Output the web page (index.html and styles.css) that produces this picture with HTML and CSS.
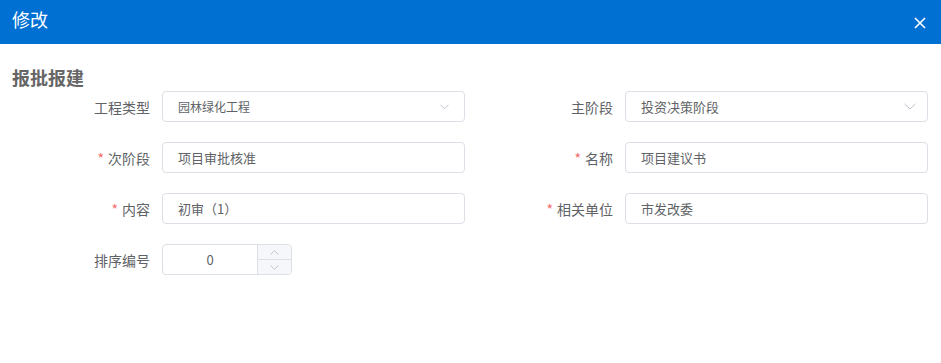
FILE: index.html
```html
<!DOCTYPE html>
<html lang="zh-CN">
<head>
    <meta charset="UTF-8">
    <title>修改</title>
    <link rel="stylesheet" href="styles.css">
</head>
<body>
<div class="dialog">
    <div class="dialog-header">
        <span class="dialog-title">修改</span>
        <span class="dialog-close">
            <svg width="12" height="12" viewBox="0 0 12 12"><path d="M1 1L11 11M11 1L1 11" stroke="#fff" stroke-width="1.6" fill="none"/></svg>
        </span>
    </div>
    <div class="dialog-body">
        <h2 class="section-title">报批报建</h2>
        <form class="form">
            <div class="form-item">
                <label class="form-label">工程类型</label>
                <div class="control select small">
                    <span>园林绿化工程</span>
                    <svg class="arrow" width="9" height="6" viewBox="0 0 9 6"><path d="M0.5 0.8L4.5 4.8L8.5 0.8" stroke="#c0c4cc" fill="none"/></svg>
                </div>
            </div>
            <div class="form-item">
                <label class="form-label">主阶段</label>
                <div class="control select">
                    <span>投资决策阶段</span>
                    <svg class="arrow" width="12" height="7" viewBox="0 0 12 7"><path d="M0.5 0.8L6 6L11.5 0.8" stroke="#c0c4cc" fill="none"/></svg>
                </div>
            </div>
            <div class="form-item">
                <label class="form-label"><i class="req">*</i>次阶段</label>
                <div class="control">项目审批核准</div>
            </div>
            <div class="form-item">
                <label class="form-label"><i class="req">*</i>名称</label>
                <div class="control">项目建议书</div>
            </div>
            <div class="form-item">
                <label class="form-label"><i class="req">*</i>内容</label>
                <div class="control">初审（1）</div>
            </div>
            <div class="form-item">
                <label class="form-label"><i class="req">*</i>相关单位</label>
                <div class="control">市发改委</div>
            </div>
            <div class="form-item">
                <label class="form-label">排序编号</label>
                <div class="number">
                    <span class="number-value">0</span>
                    <span class="number-spin">
                        <span class="spin-btn"><svg width="9" height="5" viewBox="0 0 9 5"><path d="M0.5 4.5L4.5 0.7L8.5 4.5" stroke="#c0c4cc" fill="none"/></svg></span>
                        <span class="spin-btn"><svg width="9" height="5" viewBox="0 0 9 5"><path d="M0.5 0.5L4.5 4.3L8.5 0.5" stroke="#c0c4cc" fill="none"/></svg></span>
                    </span>
                </div>
            </div>
        </form>
    </div>
</div>
</body>
</html>
```

FILE: styles.css
```css
html, body {
    margin: 0;
    height: 100%;
}

body {
    font-family: "Noto Sans CJK SC", "Liberation Sans", sans-serif;
    background-color: #fff;
    color: #606266;
}

.dialog-header {
    display: flex;
    justify-content: space-between;
    align-items: center;
    height: 44px;
    padding: 0 15px 0 12px;
    background-color: #0070d2;
    color: #fff;
}

.dialog-title {
    font-size: 18px;
    line-height: 24px;
    margin-top: -6px;
}

.dialog-close {
    display: flex;
    margin-top: 1px;
}

.section-title {
    margin: 0;
    padding: 21px 12px 2px;
    font-size: 18px;
    line-height: 24px;
    font-weight: bold;
    color: #666;
}

.form {
    display: grid;
    grid-template-columns: 463px 463px;
    row-gap: 20px;
}

.form-item {
    display: flex;
    align-items: center;
}

.form-label {
    flex-shrink: 0;
    width: 162px;
    box-sizing: border-box;
    padding-right: 12px;
    text-align: right;
    font-size: 14px;
}

.req {
    font-style: normal;
    color: #f56c6c;
    margin-right: 4px;
}

.control {
    flex-shrink: 0;
    display: flex;
    align-items: center;
    justify-content: space-between;
    box-sizing: border-box;
    width: 303px;
    height: 31px;
    padding: 0 15px;
    border: 1px solid #dcdfe6;
    border-radius: 4px;
    font-size: 13px;
    color: #606266;
}

.control.small {
    font-size: 12px;
}

.select .arrow {
    margin-right: -4px;
}

.select.small .arrow {
    margin-right: 0;
}

.number {
    flex-shrink: 0;
    display: flex;
    box-sizing: border-box;
    width: 130px;
    height: 31px;
    border: 1px solid #dcdfe6;
    border-radius: 4px;
    overflow: hidden;
}

.number-value {
    flex: 1;
    display: flex;
    align-items: center;
    justify-content: center;
    font-size: 13px;
}

.number-spin {
    display: flex;
    flex-direction: column;
    width: 33px;
    border-left: 1px solid #dcdfe6;
    background-color: #f5f7fa;
}

.spin-btn {
    flex: 1;
    display: flex;
    align-items: center;
    justify-content: center;
}

.spin-btn + .spin-btn {
    border-top: 1px solid #dcdfe6;
}
```
